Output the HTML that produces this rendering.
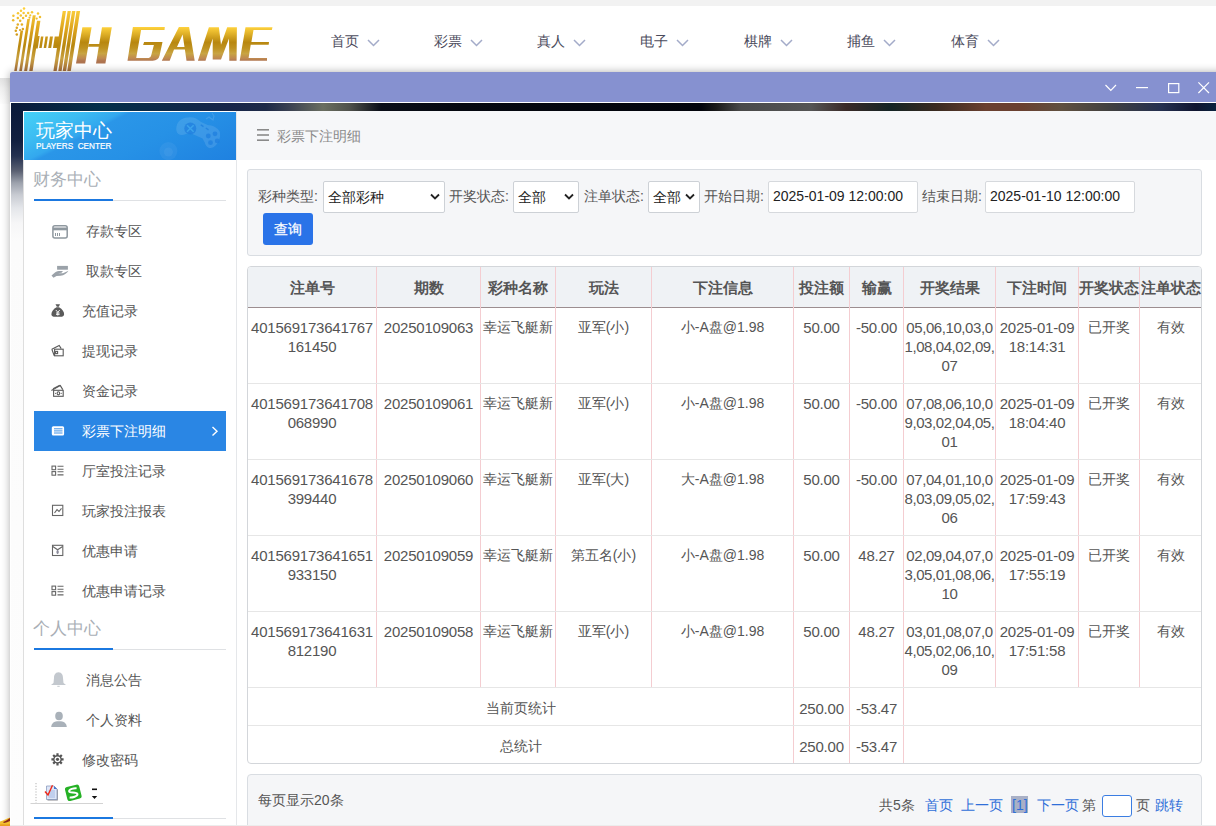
<!DOCTYPE html>
<html><head><meta charset="utf-8"><style>
*{box-sizing:border-box;margin:0;padding:0}
html,body{width:1216px;height:826px;overflow:hidden;background:#f4f4f4;font-family:"Liberation Sans",sans-serif;}
#root{position:relative;width:1216px;height:826px;overflow:hidden;background:#fff}
.a{position:absolute;white-space:nowrap}
.topstrip{left:0;top:0;width:1216px;height:6px;background:#f2f2f2}
.header{left:0;top:6px;width:1216px;height:72px;background:#fff}
.nav{font-size:13.5px;color:#4b4b5c;line-height:17px}
.win{left:10px;top:72px;width:1216px;height:753px;background:#fff;box-shadow:0 0 9px rgba(0,0,0,.33);border-radius:2px 0 0 0}
.title{left:10px;top:72px;width:1206px;height:30px;background:#8691d0;border-radius:2px 0 0 0}
.wline{left:10px;top:102px;width:1206px;height:1px;background:#fff}
.space{left:11px;top:103px;width:1205px;height:8px;background:linear-gradient(90deg,#0b1a3a 0px,#03304a 90px,#18264a 220px,#1e2a48 255px,#3a4152 278px,#6a6e60 312px,#50524c 338px,#0a0e18 370px,#050810 450px,#03050c 690px,#1a1a1a 705px,#4a4a4a 730px,#555 800px,#3a2a28 835px,#152525 880px,#3a2a20 925px,#6a4030 975px,#6a4030 1010px,#605040 1050px,#404040 1100px,#253050 1150px,#101530 1185px,#052a45 1216px)}
.lstrip{left:11px;top:111px;width:12px;height:714px;background:linear-gradient(180deg,#0b1a3a 0px,#122040 30px,#243150 45px,#5a6072 60px,#9da2ad 72px,#c8cbd2 84px,#e4e6ea 97px,#f6f6f7 112px,#fbfbfb 130px,#fdfdfd 100%)}
.side{left:23px;top:111px;width:214px;height:720px;background:#fff;border-left:1px solid #dedede;border-right:1px solid #e5e7ea}
.sidehead{left:23px;top:111px;width:213px;height:49px;border-top:1px solid #fff;border-left:1px solid #fff;background:linear-gradient(153deg,#45d1f7 0%,#3cbcf2 20%,#33a8ee 32%,#2a96e8 35%,#2691e6 60%,#1f81e0 100%);overflow:hidden}
.sect{font-size:17px;color:#a9afb6;line-height:20px}
.secline{left:34px;width:192px;height:1px;background:#dfe1e4}
.secblue{left:34px;width:79px;height:2px;background:#1b78e0}
.it{font-size:14px;color:#555;line-height:18px}
.act{left:34px;top:411px;width:192px;height:40px;background:#2a86e4}
.crumb{left:237px;top:111px;width:979px;height:49px;background:#f6f7f9}
.main{left:237px;top:160px;width:979px;height:665px;background:#fff}
.filter{left:247px;top:169px;width:955px;height:87px;background:#f5f6f8;border:1px solid #d9dde2;border-radius:3px}
.lbl{font-size:14px;color:#555;line-height:18px}
.sel{height:32px;background:#fff;border:1px solid #cdd1d6;border-radius:2px}
.selt{font-size:14px;color:#222;line-height:18px}
.btn{left:263px;top:213px;width:50px;height:32px;background:#2a73e8;border-radius:3px}
.tbl{left:247px;top:266px;width:955px;height:498px;border:1px solid #d3d6da;border-radius:4px;background:#fff}
.thead{left:248px;top:267px;width:953px;height:40px;background:#eff2f5;border-radius:3px 3px 0 0}
.hb{left:248px;top:307px;width:953px;height:1px;background:#9c8e90}
.vl{width:1px;background:#f4cdd1}
.hl{height:1px;background:#e6e6e6}
.th{font-size:15px;font-weight:bold;color:#555;line-height:20px;text-align:center}
.td{font-size:14px;color:#555;line-height:19px;text-align:center}
.dg{font-size:15px;letter-spacing:-0.22px;margin-top:-0.5px}
.rs{letter-spacing:-0.42px}
.pager{left:247px;top:774px;width:955px;height:80px;background:#f5f6f8;border:1px solid #d9dde2;border-radius:4px}
.pt{font-size:14px;color:#555;line-height:18px}
.pb{color:#2f6fd8}
.bottom{left:0;top:825px;width:1216px;height:1px;background:#ececec}
</style></head><body><div id="root">
<div class="a topstrip"></div>
<div class="a header"><svg class="abs" style="left:0;top:0" width="300" height="72" viewBox="0 6 300 72">
<defs>
<linearGradient id="gB" gradientUnits="userSpaceOnUse" x1="0" y1="8" x2="0" y2="71">
<stop offset="0" stop-color="#ffd23c"/><stop offset="0.35" stop-color="#dba21c"/><stop offset="0.6" stop-color="#b8870f"/><stop offset="0.8" stop-color="#c8a040"/><stop offset="1" stop-color="#a8703c"/></linearGradient>
<linearGradient id="gG" gradientUnits="userSpaceOnUse" x1="0" y1="27" x2="0" y2="61">
<stop offset="0" stop-color="#ffd23c"/><stop offset="0.45" stop-color="#b8870f"/><stop offset="0.62" stop-color="#bf9220"/><stop offset="0.78" stop-color="#c8a442"/><stop offset="0.92" stop-color="#c08a50"/><stop offset="1" stop-color="#ae7450"/></linearGradient>
</defs>
<g fill="url(#gB)">
<g transform="translate(11,0) skewX(-8.8)">
<rect x="14.2" y="30.4" width="2.6" height="40.6"/>
<rect x="19.2" y="19" width="2.7" height="52"/>
<rect x="24.1" y="15.2" width="3" height="55.8"/>
<rect x="29.2" y="20.7" width="3.4" height="50.3"/>
<rect x="30" y="36" width="4.2" height="12.5"/>
<rect x="35.6" y="36.5" width="2.5" height="11.5"/>
<rect x="40.1" y="36.5" width="2.5" height="11.5"/>
<rect x="44.6" y="36.5" width="3" height="11.5"/>
<rect x="49.4" y="36.5" width="5" height="11.5"/>
<rect x="53.4" y="11" width="3.3" height="60"/>
<rect x="58.3" y="11" width="3.3" height="60"/>
<rect x="62.7" y="11" width="3.4" height="60"/>
<rect x="67.2" y="11" width="3.6" height="60"/>
</g>
<circle cx="24" cy="8.4" r="1.25"/><circle cx="21" cy="10.8" r="1.25"/><circle cx="18" cy="13.2" r="1.25"/><circle cx="23.6" cy="13" r="1.25"/><circle cx="28.2" cy="13" r="1.25"/><circle cx="32" cy="12.2" r="1.25"/><circle cx="38" cy="13.5" r="1.25"/><circle cx="13.4" cy="15.8" r="1.25"/><circle cx="20.8" cy="15.6" r="1.25"/><circle cx="26" cy="15.8" r="1.25"/><circle cx="30.3" cy="15.3" r="1.1"/><circle cx="40" cy="16.9" r="1.25"/><circle cx="17.8" cy="18.1" r="1.25"/><circle cx="23.1" cy="18.1" r="1.25"/><circle cx="29.5" cy="17.7" r="1.1"/><circle cx="13.2" cy="20.3" r="1.25"/><circle cx="20.2" cy="20.7" r="1.25"/><circle cx="36.7" cy="18.6" r="1.1"/><circle cx="17.8" cy="24.5" r="1.25"/><circle cx="21.9" cy="24.5" r="1.25"/><circle cx="16.8" cy="27.7" r="1.25"/><circle cx="22.9" cy="28.9" r="1.25"/><circle cx="15.8" cy="30.8" r="1.25"/><circle cx="20" cy="30" r="1.1"/><circle cx="16.8" cy="34.5" r="1.25"/>
</g>
<g fill="url(#gG)">
<polygon points="82.4,27.3 91.6,27.3 85.2,63.5 76,63.5"/>
<polygon points="102,27.3 111.8,27.3 105.4,63.5 96,63.5"/>
<polygon points="88.6,44 102,44 101.5,46.8 88.1,46.8"/>
<path d="M132.9,26.9 L164.8,26.9 L164.5,29.9 L141.1,29.9 L136.2,57.9 L148.7,57.9 Q150.8,57.6 151.3,54.9 L153.9,45 L143.1,45 L144.1,42.1 L162.5,42.1 L159.6,55.5 Q158.5,60.5 152.6,60.8 L127.5,60.8 Z"/>
<path d="M178.9,26.9 L189.1,26.9 L194.7,60.8 L186.5,60.8 L184.9,49.6 L174,49.6 L169.7,60.8 L161.8,60.8 Z M182.6,34.5 L177,47 L184.5,47 Z" fill-rule="evenodd"/>
<polygon points="197.9,60.7 208.9,27.2 218.9,27.2 221,44.8 227.2,27.2 236.9,27.2 236.6,60.7 229.3,60.7 229,38.6 221,59.6 212.7,59.6 212.7,38.6 205.5,60.7"/>
<polygon points="245.5,27.2 272.5,27.2 271.8,29.9 253.5,29.9 251.4,42 269,42 268.7,44.8 250.7,44.8 248.6,57.9 267,57.9 267,60.7 239.7,60.7"/>
</g>
</svg>
</div>
<div class="a nav" style="left:331px;top:33px;">首页</div>
<svg class="a" style="left:367px;top:39px" width="13" height="8" viewBox="0 0 13 8"><path d="M1 1 L6.5 6.5 L12 1" fill="none" stroke="#a3abc9" stroke-width="1.5"/></svg>
<div class="a nav" style="left:434px;top:33px;">彩票</div>
<svg class="a" style="left:470px;top:39px" width="13" height="8" viewBox="0 0 13 8"><path d="M1 1 L6.5 6.5 L12 1" fill="none" stroke="#a3abc9" stroke-width="1.5"/></svg>
<div class="a nav" style="left:537px;top:33px;">真人</div>
<svg class="a" style="left:573px;top:39px" width="13" height="8" viewBox="0 0 13 8"><path d="M1 1 L6.5 6.5 L12 1" fill="none" stroke="#a3abc9" stroke-width="1.5"/></svg>
<div class="a nav" style="left:640px;top:33px;">电子</div>
<svg class="a" style="left:676px;top:39px" width="13" height="8" viewBox="0 0 13 8"><path d="M1 1 L6.5 6.5 L12 1" fill="none" stroke="#a3abc9" stroke-width="1.5"/></svg>
<div class="a nav" style="left:744px;top:33px;">棋牌</div>
<svg class="a" style="left:780px;top:39px" width="13" height="8" viewBox="0 0 13 8"><path d="M1 1 L6.5 6.5 L12 1" fill="none" stroke="#a3abc9" stroke-width="1.5"/></svg>
<div class="a nav" style="left:847px;top:33px;">捕鱼</div>
<svg class="a" style="left:883px;top:39px" width="13" height="8" viewBox="0 0 13 8"><path d="M1 1 L6.5 6.5 L12 1" fill="none" stroke="#a3abc9" stroke-width="1.5"/></svg>
<div class="a nav" style="left:951px;top:33px;">体育</div>
<svg class="a" style="left:987px;top:39px" width="13" height="8" viewBox="0 0 13 8"><path d="M1 1 L6.5 6.5 L12 1" fill="none" stroke="#a3abc9" stroke-width="1.5"/></svg>
<div class="a" style="left:0;top:78px;width:20px;height:26px;background:linear-gradient(180deg,#e2e2e2,#f0f0f0 40%,#fcfcfc)"></div>
<div class="a win"></div><div class="a title"></div><div class="a wline"></div><div class="a space"></div><div class="a lstrip"></div>
<svg class="a" style="left:1100px;top:78px" width="116" height="20" viewBox="1100 78 116 20">
<path d="M1105.5 85 L1110.8 90.3 L1116 85" fill="none" stroke="#fff" stroke-width="1.2"/>
<path d="M1136 87.6 H1148" stroke="#fff" stroke-width="1.2"/>
<rect x="1168.6" y="83.6" width="10.2" height="9" fill="none" stroke="#fff" stroke-width="1.2"/>
<path d="M1198.4 82.4 L1209 93 M1209 82.4 L1198.4 93" stroke="#fff" stroke-width="1.2"/>
</svg>
<div class="a side"></div><div class="a sidehead"></div>
<svg class="a" style="left:23px;top:111px" width="213" height="49" viewBox="23 111 213 49">
<g transform="translate(199 131) scale(0.9) rotate(24) translate(-200 -131)">
<path d="M183 122 C187 119 193 119 198 121 L206 121 C211 119 217 119 221 122 C225 126 226 135 222 141 C219 145 214 144 211 140 L207 137 L192 137 L188 140 C185 144 180 145 177 141 C173 135 174 126 183 122 Z" fill="#ffffff" fill-opacity="0.11"/>
</g>
<circle cx="190.3" cy="128.5" r="6" fill="#1f7fdf" fill-opacity="0.75"/>
<path d="M187 125.2 L193.6 131.8 M193.6 125.2 L187 131.8" stroke="#3aa2ec" stroke-width="1.6"/>
<path d="M200.8 124.8 L203.5 126.6 M205.8 128 L208.5 129.8" stroke="#1f7fdf" stroke-width="1.4" stroke-opacity="0.8"/>
<g fill="#1f7fdf" fill-opacity="0.75"><circle cx="215" cy="133.8" r="2.4"/><circle cx="208.3" cy="136" r="2.4"/><circle cx="217.2" cy="140.9" r="2.4"/><circle cx="210.5" cy="142.7" r="2.4"/></g>
<path d="M206 119 L209 117 L213 120 L214 116 L212 113" stroke="#ffffff" stroke-opacity="0.12" stroke-width="1.2" fill="none"/>
<circle cx="168.4" cy="151.1" r="9" fill="#ffffff" fill-opacity="0.05"/>
<circle cx="168.4" cy="152" r="4.5" fill="#ffffff" fill-opacity="0.05"/>
</svg>
<div class="a a" style="left:36px;top:120px;font-size:19px;color:#fff;line-height:22px">玩家中心</div>
<div class="a a" style="left:36px;top:141.5px;font-size:8.2px;color:#fff;line-height:10px;letter-spacing:0px;-webkit-text-stroke:0.2px #fff">PLAYERS&nbsp; CENTER</div>
<div class="a sect" style="left:33px;top:170px;">财务中心</div>
<div class="a secline" style="top:200px"></div><div class="a secblue" style="top:199px"></div>
<div class="a act"></div>
<div class="a it" style="left:86px;top:222px;color:#555">存款专区</div>
<div class="a it" style="left:86px;top:262px;color:#555">取款专区</div>
<div class="a it" style="left:82px;top:302px;color:#555">充值记录</div>
<div class="a it" style="left:82px;top:342px;color:#555">提现记录</div>
<div class="a it" style="left:82px;top:382px;color:#555">资金记录</div>
<div class="a it" style="left:82px;top:422px;color:#fff">彩票下注明细</div>
<div class="a it" style="left:82px;top:462px;color:#555">厅室投注记录</div>
<div class="a it" style="left:82px;top:502px;color:#555">玩家投注报表</div>
<div class="a it" style="left:82px;top:542px;color:#555">优惠申请</div>
<div class="a it" style="left:82px;top:582px;color:#555">优惠申请记录</div>
<div class="a sect" style="left:33px;top:619px;">个人中心</div>
<div class="a secline" style="top:649px"></div><div class="a secblue" style="top:648px"></div>
<div class="a it" style="left:86px;top:671px;">消息公告</div>
<div class="a it" style="left:86px;top:711px;">个人资料</div>
<div class="a it" style="left:82px;top:751px;">修改密码</div>
<div class="a secline" style="top:818px"></div><div class="a secblue" style="top:817px"></div>
<svg class="a" style="left:0;top:0" width="240" height="826" viewBox="0 0 240 826">
<g fill="none" stroke="#8f989f" stroke-width="1.5">
<rect x="52.9" y="225.8" width="14.3" height="12.3" rx="2"/>
</g>
<rect x="53" y="227.5" width="14" height="2.8" fill="#8f989f"/>
<g stroke="#8f989f" stroke-width="1"><path d="M55.5 233 V236 M57.5 233 V236 M59.5 233 V236"/></g>
<rect x="57.1" y="265.9" width="10.8" height="3.8" fill="#9ba2a9"/>
<path d="M51.5 275.5 L55 272.5 C57 271 60 270.8 63 271.2 L61.5 272.8 L58 273.3 L63 273.3 L68.5 270.8 C67 273.5 64 275.3 60.5 275.8 L56.5 275.9 L53.5 277.8 Z" fill="#9ba2a9"/>
<g fill="#5a5a5a">
<path d="M55.5 304.2 L60 304.2 L58.8 306.8 L56.8 306.8 Z"/>
<path d="M56.5 307.2 L59 307.2 C62.5 309 64.3 312 64.1 314.5 C64 316.3 62.5 316.8 60.5 316.8 L55 316.8 C53 316.8 51.4 316.3 51.4 314.5 C51.4 312 53 309 56.5 307.2 Z"/>
</g>
<path d="M55.8 310 L57.8 312.2 L59.8 310 M57.8 312.2 V315.6 M56 313 H59.6 M56 314.4 H59.6" stroke="#fff" stroke-width="0.9" fill="none"/>
<g fill="none" stroke="#5a5a5a" stroke-width="1.1">
<path d="M51.8 349.2 L59.2 345.4 L61.2 348.6"/>
<rect x="54.6" y="349.2" width="8.6" height="6.6"/>
<path d="M51.8 349.2 L54.3 355.8"/>
<rect x="55.6" y="351.4" width="2" height="2.2"/>
</g>
<g fill="none" stroke="#5a5a5a" stroke-width="1.1">
<path d="M51.4 390.4 L60.3 385.6 L62.8 389.6"/>
<path d="M53 388.8 L59.8 385.2"/>
<rect x="53.6" y="390.3" width="9.6" height="6"/>
<ellipse cx="58.4" cy="393.3" rx="1.3" ry="1.6"/>
</g>
<g fill="#5a5a5a"><circle cx="55.6" cy="393.3" r="0.6"/><circle cx="61.2" cy="393.3" r="0.6"/></g>
<rect x="51.8" y="426.3" width="12.3" height="9.3" rx="1.5" fill="#fff"/>
<g stroke="#2a86e4" stroke-width="0.9"><path d="M54 428.8 H62.5 M54 430.9 H62.5 M54 433 H62.5"/></g>
<g fill="none" stroke="#666" stroke-width="1.1">
<rect x="52" y="466.1" width="3.6" height="3.6"/><rect x="52" y="471.6" width="3.6" height="3.6"/>
<path d="M57.5 466.3 H63.5 M57.5 469.3 H63.5 M57.5 471.8 H63.5 M57.5 474.9 H63.5"/>
<rect x="52.5" y="505.3" width="10.3" height="10.2"/>
<path d="M54.5 513 L57 509.6 L59 511.5 L61.5 508.3"/>
<rect x="52.5" y="545.3" width="10.3" height="10.2"/>
<path d="M52.8 546.5 L57.6 549.8 L62.6 546.5"/>
</g><path d="M57.6 549.5 C59.2 551 59.3 552.8 57.6 554.3 C55.9 552.8 56 551 57.6 549.5 Z" fill="#8a8a9a"/><g fill="none" stroke="#666" stroke-width="1.1">
<rect x="52" y="586.1" width="3.6" height="3.6"/><rect x="52" y="591.6" width="3.6" height="3.6"/>
<path d="M57.5 586.3 H63.5 M57.5 589.3 H63.5 M57.5 591.8 H63.5 M57.5 594.9 H63.5"/>
</g>
<path d="M58.5 672.2 C55 672.5 54 675 54 678 L53.5 683 L51 685 H66 L63.5 683 L63 678 C63 675 62 672.5 58.5 672.2 Z" fill="#c3c8ce"/>
<rect x="57.3" y="685.8" width="2.4" height="1" fill="#c3c8ce"/>
<ellipse cx="59" cy="716" rx="3.8" ry="4.3" fill="#a9b1b9"/>
<path d="M51.2 727 C51.5 723.5 54 721.5 57 721.3 H61 C64 721.5 66.5 723.5 66.8 727 Z" fill="#a9b1b9"/>
<g stroke="#555" stroke-width="2.2">
<path d="M57.5 753.2 V765.4 M51.4 759.3 H63.6 M53.2 755 L61.8 763.6 M61.8 755 L53.2 763.6"/>
</g>
<circle cx="57.5" cy="759.3" r="4.3" fill="#555"/>
<circle cx="57.5" cy="759.3" r="2.9" fill="#fff"/>
<circle cx="57.5" cy="759.3" r="1.6" fill="#555"/>
</svg>
<svg class="a" style="left:210px;top:425px" width="10" height="12" viewBox="0 0 10 12"><path d="M2.5 2 L7 6.2 L2.5 10.4" fill="none" stroke="#fff" stroke-width="1.4"/></svg>
<svg class="a" style="left:28px;top:780px" width="80" height="30" viewBox="28 780 80 30">
<path d="M36 783 V803" stroke="#aaa" stroke-width="0.9" stroke-dasharray="1.2,1.6"/>
<path d="M30.5 803.5 H103" stroke="#c8c8c8" stroke-width="0.8"/>
<path d="M47.5 787 H55 L57.8 789.8 V800.5 H47.5 Z" fill="#8a8a90"/>
<path d="M46.5 786 H54 L57 789 V799.5 H46.5 Z" fill="#dde6f8" stroke="#7f90b8" stroke-width="0.7"/>
<path d="M54 786 V789 H57" fill="#4a78d0"/>
<path d="M48.5 791 H55 M48.5 793 H55 M48.5 795 H55 M48.5 797 H55" stroke="#7e9ad6" stroke-width="0.6"/>
<path d="M45 791.5 L48 795 L52.5 785.2" fill="none" stroke="#f02818" stroke-width="1.4"/>
<g transform="rotate(-14 73.3 792.8)">
<rect x="66" y="785.6" width="14.6" height="14.4" rx="2.5" fill="#25b125"/>
<path d="M77.6 789.3 C75.5 788.3 69.5 788.2 69.6 790.6 C69.7 792.6 77 792.3 77 795 C77 797.3 71 797.5 68.6 796.5" fill="none" stroke="#fff" stroke-width="2"/>
</g>
<rect x="92" y="788.5" width="5" height="1.6" fill="#111"/>
<path d="M91.8 796 H97.2 L94.5 799 Z" fill="#111"/>
</svg>
<div class="a crumb"></div><div class="a main"></div>
<svg class="a" style="left:257px;top:129px" width="13" height="13" viewBox="0 0 13 13"><g fill="#8a8a8a"><rect x="0" y="0" width="12" height="1.6"/><rect x="0" y="5.2" width="12" height="1.6"/><rect x="0" y="10.4" width="12" height="1.6"/></g></svg>
<div class="a a" style="left:277px;top:127px;font-size:14px;color:#8a8a8a;line-height:18px">彩票下注明细</div>
<div class="a filter"></div>
<div class="a lbl" style="left:258px;top:187px;">彩种类型:</div>
<div class="a sel" style="left:323px;top:181px;width:122px"></div>
<div class="a selt" style="left:328px;top:188px;">全部彩种</div>
<svg class="a" style="left:430px;top:193px" width="10" height="8" viewBox="0 0 10 8"><path d="M1 1.5 L5 5.5 L9 1.5" fill="none" stroke="#222" stroke-width="1.8"/></svg>
<div class="a lbl" style="left:449px;top:187px;">开奖状态:</div>
<div class="a sel" style="left:513px;top:181px;width:66px"></div>
<div class="a selt" style="left:518px;top:188px;">全部</div>
<svg class="a" style="left:564px;top:193px" width="10" height="8" viewBox="0 0 10 8"><path d="M1 1.5 L5 5.5 L9 1.5" fill="none" stroke="#222" stroke-width="1.8"/></svg>
<div class="a lbl" style="left:584px;top:187px;">注单状态:</div>
<div class="a sel" style="left:648px;top:181px;width:52px"></div>
<div class="a selt" style="left:653px;top:188px;">全部</div>
<svg class="a" style="left:685px;top:193px" width="10" height="8" viewBox="0 0 10 8"><path d="M1 1.5 L5 5.5 L9 1.5" fill="none" stroke="#222" stroke-width="1.8"/></svg>
<div class="a lbl" style="left:704px;top:187px;">开始日期:</div>
<div class="a sel" style="left:768px;top:181px;width:150px;border-color:#d6d9dd"></div>
<div class="a selt" style="left:773px;top:187px;">2025-01-09 12:00:00</div>
<div class="a lbl" style="left:922px;top:187px;">结束日期:</div>
<div class="a sel" style="left:985px;top:181px;width:150px;border-color:#d6d9dd"></div>
<div class="a selt" style="left:990px;top:187px;">2025-01-10 12:00:00</div>
<div class="a btn"></div>
<div class="a a" style="left:274px;top:220px;font-size:14px;color:#fff;line-height:18px;-webkit-text-stroke:0.25px #fff">查询</div>
<div class="a tbl"></div><div class="a thead"></div><div class="a hb"></div>
<div class="a vl" style="left:376px;top:267px;height:420px"></div>
<div class="a vl" style="left:480px;top:267px;height:420px"></div>
<div class="a vl" style="left:555px;top:267px;height:420px"></div>
<div class="a vl" style="left:651px;top:267px;height:420px"></div>
<div class="a vl" style="left:793px;top:267px;height:496px"></div>
<div class="a vl" style="left:849px;top:267px;height:496px"></div>
<div class="a vl" style="left:903px;top:267px;height:496px"></div>
<div class="a vl" style="left:995px;top:267px;height:420px"></div>
<div class="a vl" style="left:1078px;top:267px;height:420px"></div>
<div class="a vl" style="left:1139px;top:267px;height:420px"></div>
<div class="a hl" style="left:248px;top:383px;width:953px"></div>
<div class="a hl" style="left:248px;top:459px;width:953px"></div>
<div class="a hl" style="left:248px;top:535px;width:953px"></div>
<div class="a hl" style="left:248px;top:611px;width:953px"></div>
<div class="a hl" style="left:248px;top:687px;width:953px"></div>
<div class="a hl" style="left:248px;top:725px;width:953px"></div>
<div class="a th" style="left:247px;top:278px;width:130px">注单号</div>
<div class="a th" style="left:376px;top:278px;width:105px">期数</div>
<div class="a th" style="left:480px;top:278px;width:76px">彩种名称</div>
<div class="a th" style="left:555px;top:278px;width:97px">玩法</div>
<div class="a th" style="left:651px;top:278px;width:143px">下注信息</div>
<div class="a th" style="left:793px;top:278px;width:57px">投注额</div>
<div class="a th" style="left:849px;top:278px;width:55px">输赢</div>
<div class="a th" style="left:903px;top:278px;width:93px">开奖结果</div>
<div class="a th" style="left:995px;top:278px;width:84px">下注时间</div>
<div class="a th" style="left:1078px;top:278px;width:62px">开奖状态</div>
<div class="a th" style="left:1139px;top:278px;width:63px">注单状态</div>
<div class="a td dg" style="left:247px;top:318px;width:130px">401569173641767<br>161450</div>
<div class="a td dg" style="left:376px;top:318px;width:105px">20250109063</div>
<div class="a td" style="left:480px;top:318px;width:76px">幸运飞艇新</div>
<div class="a td" style="left:555px;top:318px;width:97px">亚军(小)</div>
<div class="a td" style="left:651px;top:318px;width:143px">小-A盘@1.98</div>
<div class="a td dg" style="left:793px;top:318px;width:57px">50.00</div>
<div class="a td dg" style="left:849px;top:318px;width:55px">-50.00</div>
<div class="a td dg rs" style="left:903px;top:318px;width:93px">05,06,10,03,0<br>1,08,04,02,09,<br>07</div>
<div class="a td dg" style="left:995px;top:318px;width:84px">2025-01-09<br>18:14:31</div>
<div class="a td" style="left:1078px;top:318px;width:62px">已开奖</div>
<div class="a td" style="left:1139px;top:318px;width:63px">有效</div>
<div class="a td dg" style="left:247px;top:394px;width:130px">401569173641708<br>068990</div>
<div class="a td dg" style="left:376px;top:394px;width:105px">20250109061</div>
<div class="a td" style="left:480px;top:394px;width:76px">幸运飞艇新</div>
<div class="a td" style="left:555px;top:394px;width:97px">亚军(小)</div>
<div class="a td" style="left:651px;top:394px;width:143px">小-A盘@1.98</div>
<div class="a td dg" style="left:793px;top:394px;width:57px">50.00</div>
<div class="a td dg" style="left:849px;top:394px;width:55px">-50.00</div>
<div class="a td dg rs" style="left:903px;top:394px;width:93px">07,08,06,10,0<br>9,03,02,04,05,<br>01</div>
<div class="a td dg" style="left:995px;top:394px;width:84px">2025-01-09<br>18:04:40</div>
<div class="a td" style="left:1078px;top:394px;width:62px">已开奖</div>
<div class="a td" style="left:1139px;top:394px;width:63px">有效</div>
<div class="a td dg" style="left:247px;top:470px;width:130px">401569173641678<br>399440</div>
<div class="a td dg" style="left:376px;top:470px;width:105px">20250109060</div>
<div class="a td" style="left:480px;top:470px;width:76px">幸运飞艇新</div>
<div class="a td" style="left:555px;top:470px;width:97px">亚军(大)</div>
<div class="a td" style="left:651px;top:470px;width:143px">大-A盘@1.98</div>
<div class="a td dg" style="left:793px;top:470px;width:57px">50.00</div>
<div class="a td dg" style="left:849px;top:470px;width:55px">-50.00</div>
<div class="a td dg rs" style="left:903px;top:470px;width:93px">07,04,01,10,0<br>8,03,09,05,02,<br>06</div>
<div class="a td dg" style="left:995px;top:470px;width:84px">2025-01-09<br>17:59:43</div>
<div class="a td" style="left:1078px;top:470px;width:62px">已开奖</div>
<div class="a td" style="left:1139px;top:470px;width:63px">有效</div>
<div class="a td dg" style="left:247px;top:546px;width:130px">401569173641651<br>933150</div>
<div class="a td dg" style="left:376px;top:546px;width:105px">20250109059</div>
<div class="a td" style="left:480px;top:546px;width:76px">幸运飞艇新</div>
<div class="a td" style="left:555px;top:546px;width:97px">第五名(小)</div>
<div class="a td" style="left:651px;top:546px;width:143px">小-A盘@1.98</div>
<div class="a td dg" style="left:793px;top:546px;width:57px">50.00</div>
<div class="a td dg" style="left:849px;top:546px;width:55px">48.27</div>
<div class="a td dg rs" style="left:903px;top:546px;width:93px">02,09,04,07,0<br>3,05,01,08,06,<br>10</div>
<div class="a td dg" style="left:995px;top:546px;width:84px">2025-01-09<br>17:55:19</div>
<div class="a td" style="left:1078px;top:546px;width:62px">已开奖</div>
<div class="a td" style="left:1139px;top:546px;width:63px">有效</div>
<div class="a td dg" style="left:247px;top:622px;width:130px">401569173641631<br>812190</div>
<div class="a td dg" style="left:376px;top:622px;width:105px">20250109058</div>
<div class="a td" style="left:480px;top:622px;width:76px">幸运飞艇新</div>
<div class="a td" style="left:555px;top:622px;width:97px">亚军(小)</div>
<div class="a td" style="left:651px;top:622px;width:143px">小-A盘@1.98</div>
<div class="a td dg" style="left:793px;top:622px;width:57px">50.00</div>
<div class="a td dg" style="left:849px;top:622px;width:55px">48.27</div>
<div class="a td dg rs" style="left:903px;top:622px;width:93px">03,01,08,07,0<br>4,05,02,06,10,<br>09</div>
<div class="a td dg" style="left:995px;top:622px;width:84px">2025-01-09<br>17:51:58</div>
<div class="a td" style="left:1078px;top:622px;width:62px">已开奖</div>
<div class="a td" style="left:1139px;top:622px;width:63px">有效</div>
<div class="a td" style="left:247px;top:699px;width:547px">当前页统计</div>
<div class="a td dg" style="left:793px;top:699px;width:57px">250.00</div>
<div class="a td dg" style="left:849px;top:699px;width:55px">-53.47</div>
<div class="a td" style="left:247px;top:737px;width:547px">总统计</div>
<div class="a td dg" style="left:793px;top:737px;width:57px">250.00</div>
<div class="a td dg" style="left:849px;top:737px;width:55px">-53.47</div>
<div class="a pager"></div>
<div class="a pt" style="left:258px;top:791px;">每页显示20条</div>
<div class="a pt" style="left:879px;top:796px;">共5条</div>
<div class="a pt pb" style="left:925px;top:796px;">首页</div>
<div class="a pt pb" style="left:961px;top:796px;">上一页</div>
<div class="a" style="left:1011px;top:796px;width:17px;height:17px;background:#a9b0c6"></div>
<div class="a pt pb" style="left:1012px;top:796px;">[1]</div>
<div class="a pt pb" style="left:1037px;top:796px;">下一页</div>
<div class="a pt" style="left:1082px;top:796px;">第</div>
<div class="a" style="left:1102px;top:795px;width:30px;height:22px;background:#fff;border:1px solid #3b7de2;border-radius:3px"></div>
<div class="a pt" style="left:1136px;top:796px;">页</div>
<div class="a pt pb" style="left:1155px;top:796px;">跳转</div>
<div class="a bottom"></div>
<svg class="a" style="left:0;top:816px" width="10" height="10" viewBox="0 814 10 10"><path d="M0 819.5 C3 818.5 6 817 10 815.5 V826 H0 Z" fill="#f2c030"/><path d="M3 820 C5.5 819 8 817.5 10 816 V819 C8 820 6 820.5 4 821 Z" fill="#8c2a18"/><path d="M0 822.5 C3 822 6 823 10 822 V826 H0 Z" fill="#e8a020"/><path d="M0 824.5 C4 824 7 825 10 824.5 V826 H0 Z" fill="#c84010"/></svg>
</div></body></html>
